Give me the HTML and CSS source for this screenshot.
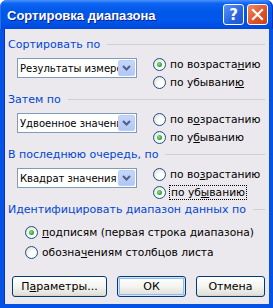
FILE: index.html
```html
<!DOCTYPE html>
<html lang="ru">
<head>
    <meta charset="UTF-8">
    <meta name="viewport" content="width=device-width, initial-scale=1.0">
    <title>Сортировка диапазона</title>
    <link rel="stylesheet" href="styles.css">
</head>
<body>
    <div class="window">
        <div class="titlebar">
            <span class="title">Сортировка диапазона</span>
            <span class="tb-btn help">?</span>
            <span class="tb-btn close">
                <svg width="13" height="13" viewBox="0 0 13 13"><path d="M2 2 L11 11 M11 2 L2 11" stroke="#fff" stroke-width="2.2" stroke-linecap="square"/></svg>
            </span>
        </div>
        <div class="content">
            <div class="group-title">Сортировать по</div>
            <div class="sort-row">
                <div class="combo">
                    <span class="combo-text">Результаты измере</span>
                    <span class="combo-btn"><svg width="9" height="6" viewBox="0 0 9 6"><path d="M1 1 L4.5 4.5 L8 1" fill="none" stroke="#4d6185" stroke-width="2"/></svg></span>
                </div>
                <div class="radios">
                    <label class="radio"><span class="dot checked"></span>по возраста<u>н</u>ию</label>
                    <label class="radio"><span class="dot"></span>по убывани<u>ю</u></label>
                </div>
            </div>

            <div class="group-title">Затем по</div>
            <div class="sort-row">
                <div class="combo">
                    <span class="combo-text">Удвоенное значени</span>
                    <span class="combo-btn"><svg width="9" height="6" viewBox="0 0 9 6"><path d="M1 1 L4.5 4.5 L8 1" fill="none" stroke="#4d6185" stroke-width="2"/></svg></span>
                </div>
                <div class="radios">
                    <label class="radio"><span class="dot"></span>по в<u>о</u>зрастанию</label>
                    <label class="radio"><span class="dot checked"></span>по у<u>б</u>ыванию</label>
                </div>
            </div>

            <div class="group-title">В последнюю очередь, по</div>
            <div class="sort-row">
                <div class="combo">
                    <span class="combo-text">Квадрат значения</span>
                    <span class="combo-btn"><svg width="9" height="6" viewBox="0 0 9 6"><path d="M1 1 L4.5 4.5 L8 1" fill="none" stroke="#4d6185" stroke-width="2"/></svg></span>
                </div>
                <div class="radios">
                    <label class="radio"><span class="dot"></span>по во<u>з</u>растанию</label>
                    <label class="radio"><span class="dot checked"></span><span class="focus">по уб<u>ы</u>ванию</span></label>
                </div>
            </div>

            <div class="group-title">Идентифицировать диапазон данных по</div>
            <div class="ident">
                <label class="radio"><span class="dot checked"></span><u>п</u>одписям (первая строка диапазона)</label>
                <label class="radio"><span class="dot"></span>обозна<u>ч</u>ениям столбцов листа</label>
            </div>

            <div class="buttons">
                <button class="btn wide">П<u>а</u>раметры...</button>
                <button class="btn default">ОК</button>
                <button class="btn">Отмена</button>
            </div>
        </div>
    </div>
</body>
</html>
```

FILE: styles.css
```css
html, body {
    margin: 0;
    padding: 0;
}
body {
    font-family: "DejaVu Sans", Verdana, sans-serif;
    font-size: 11px;
    color: #000;
    background-color: #fff;
}
.window {
    width: 273px;
    height: 308px;
    display: flex;
    flex-direction: column;
    box-sizing: border-box;
}
.titlebar {
    height: 29px;
    flex: none;
    display: flex;
    align-items: center;
    padding: 0 5px 0 7px;
    border-radius: 7px 7px 0 0;
    background: linear-gradient(#4a93fb 0%, #0d63f2 12%, #0058e8 40%, #0057ec 70%, #0048dc 100%);
    box-shadow: inset 1px 0 0 #2b6fe8, inset -1px 0 0 #0033b8;
}
.title {
    flex: 1;
    color: #fff;
    font-family: "Liberation Sans", Arial, sans-serif;
    font-weight: bold;
    font-size: 13px;
    text-shadow: 1px 1px 0 #0a1e8c;
    padding-top: 1px;
}
.tb-btn {
    width: 19px;
    height: 19px;
    margin-left: 3px;
    border: 1px solid #fff;
    border-radius: 3px;
    display: flex;
    align-items: center;
    justify-content: center;
    color: #fff;
    font-family: "DejaVu Sans", sans-serif;
    font-weight: bold;
    font-size: 15px;
}
.help {
    background: linear-gradient(135deg, #5c93f4, #2863e2 60%, #1f55d3);
}
.close {
    background: linear-gradient(135deg, #f08a62, #e2542a 55%, #c7401b);
}
.content {
    flex: 1;
    display: flex;
    flex-direction: column;
    background-color: #ebe9ed;
    border: 4px solid #0553e6;
    border-top: none;
    box-shadow: inset 1px 0 0 #0831c8;
    padding: 8px 4px 0 4px;
}
.group-title {
    height: 14px;
    display: flex;
    align-items: center;
    color: #0046d5;
    white-space: nowrap;
}
.group-title::after {
    content: "";
    flex: 1;
    height: 1px;
    margin-left: 7px;
    background-color: #d0d0d4;
}
.sort-row {
    display: flex;
    align-items: flex-start;
    height: 36px;
    margin: 4px 0 1px 9px;
}
.combo {
    width: 118px;
    height: 18px;
    margin-top: 3px;
    border: 1px solid #7f9db9;
    background-color: #fff;
    display: flex;
    align-items: center;
    overflow: hidden;
    flex: none;
}
.combo-text {
    flex: 1;
    white-space: nowrap;
    overflow: hidden;
    padding-left: 2px;
    font-size: 10px;
}
.combo-btn {
    width: 17px;
    height: 16px;
    flex: none;
    margin-right: 1px;
    border: 1px solid #bacdf7;
    border-radius: 2px;
    box-sizing: border-box;
    background: linear-gradient(#c6d6fb, #b3c7f5);
    display: flex;
    align-items: center;
    justify-content: center;
}
.radios {
    margin-left: 16px;
    display: flex;
    flex-direction: column;
}
.radio {
    height: 18px;
    display: flex;
    align-items: center;
    white-space: nowrap;
    font-size: 10.7px;
}
.dot {
    width: 11px;
    height: 11px;
    border: 1px solid #1c5180;
    border-radius: 50%;
    background: radial-gradient(circle at 65% 65%, #fff 30%, #d8d5cf 100%);
    margin-right: 4px;
    display: flex;
    align-items: center;
    justify-content: center;
    flex: none;
}
.dot.checked::after {
    content: "";
    width: 5px;
    height: 5px;
    border-radius: 50%;
    background: radial-gradient(circle at 40% 40%, #8ee08e, #21a121 70%);
}
.focus {
    outline: 1px dotted #000;
    outline-offset: 0;
    padding: 0 1px;
}
.ident {
    margin: 6px 0 0 17px;
    display: flex;
    flex-direction: column;
}
.ident .radio {
    height: 20px;
}
.buttons {
    display: flex;
    margin: 14px 0 0 4px;
    gap: 10px;
}
.btn {
    width: 69px;
    height: 21px;
    padding: 0;
    font-family: "DejaVu Sans", Verdana, sans-serif;
    font-size: 11px;
    color: #000;
    border: 1px solid #003c74;
    border-radius: 3px;
    background: linear-gradient(#ffffff 0%, #f4f4f0 50%, #e3e2dc 90%, #d6d0c5 100%);
}
.btn.wide {
    width: 95px;
}
.btn.default {
    box-shadow: inset 0 0 0 1px #cee7ff, inset 0 0 0 2px #98b8ea;
}
```
